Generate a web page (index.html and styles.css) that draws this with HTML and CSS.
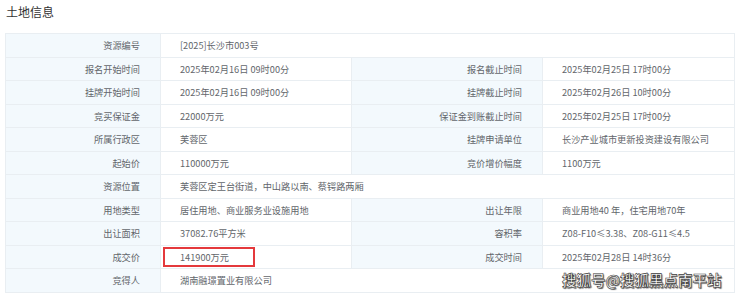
FILE: index.html
```html
<!DOCTYPE html>
<html lang="zh">
<head>
<meta charset="utf-8">
<link rel="stylesheet" href="styles.css">
</head>
<body>
<div class="page">
  <h2 class="title">土地信息</h2>
  <table class="info">
    <colgroup>
      <col class="c-label1"><col class="c-val"><col class="c-label"><col class="c-val2">
    </colgroup>
    <tr><th>资源编号</th><td colspan="3">[2025]长沙市003号</td></tr>
    <tr><th>报名开始时间</th><td>2025年02月16日 09时00分</td><th>报名截止时间</th><td>2025年02月25日 17时00分</td></tr>
    <tr><th>挂牌开始时间</th><td>2025年02月16日 09时00分</td><th>挂牌截止时间</th><td>2025年02月26日 10时00分</td></tr>
    <tr><th>竞买保证金</th><td>22000万元</td><th>保证金到账截止时间</th><td>2025年02月25日 17时00分</td></tr>
    <tr><th>所属行政区</th><td>芙蓉区</td><th>挂牌申请单位</th><td>长沙产业城市更新投资建设有限公司</td></tr>
    <tr><th>起始价</th><td>110000万元</td><th>竞价增价幅度</th><td>1100万元</td></tr>
    <tr><th>资源位置</th><td colspan="3">芙蓉区定王台街道，中山路以南、蔡锷路两厢</td></tr>
    <tr><th>用地类型</th><td>居住用地、商业服务业设施用地</td><th>出让年限</th><td>商业用地40 年，住宅用地70年</td></tr>
    <tr><th>出让面积</th><td>37082.76平方米</td><th>容积率</th><td>Z08-F10≤3.38、Z08-G11≤4.5</td></tr>
    <tr><th>成交价</th><td class="hl-cell"><span class="hl-box"></span>141900万元</td><th>成交时间</th><td>2025年02月28日 14时36分</td></tr>
    <tr><th>竞得人</th><td colspan="3">湖南融璟置业有限公司</td></tr>
  </table>
  <div class="watermark">搜狐号@搜狐黑点南平站</div>
</div>
</body>
</html>
```
FILE: styles.css
```css
html, body {
  margin: 0;
  padding: 0;
  background: #ffffff;
}
body {
  width: 740px;
  height: 299px;
  overflow: hidden;
  font-family: "Noto Sans CJK SC", "Microsoft YaHei", sans-serif;
}
.page {
  position: relative;
  padding: 0 0 0 5px;
}
.title {
  margin: 0;
  padding: 4px 0 0 1px;
  height: 29px;
  box-sizing: border-box;
  font-size: 12px;
  line-height: 16px;
  font-weight: normal;
  color: #333333;
}
.info {
  border-collapse: collapse;
  table-layout: fixed;
  width: 729px;
  margin-top: 4px;
  font-size: 9.2px;
  color: #62666b;
}
.c-label1 { width: 155px; }
.c-val { width: 191px; }
.c-label { width: 191px; }
.c-val2 { width: 192px; }
.info th, .info td {
  height: 23.5px;
  padding: 0;
  box-sizing: border-box;
  border: 1px solid #e9eef2;
  line-height: 12px;
  white-space: nowrap;
}
.info th {
  background: #f3f9fd;
  font-weight: normal;
  text-align: right;
  padding-right: 20px;
}
.info td {
  background: #ffffff;
  text-align: left;
  padding-left: 19px;
}
.hl-cell {
  position: relative;
}
.hl-box {
  position: absolute;
  left: 2px;
  top: 1px;
  width: 92px;
  height: 20px;
  box-sizing: border-box;
  border: 2px solid #e4393c;
}
.watermark {
  position: absolute;
  left: 562px;
  top: 269px;
  white-space: nowrap;
  font-size: 14.5px;
  line-height: 22px;
  font-weight: bold;
  color: #ffffff;
  -webkit-text-stroke: 0.6px #3a3a3a;
  text-shadow: 1px 1px 1px rgba(0,0,0,0.6);
}
```
